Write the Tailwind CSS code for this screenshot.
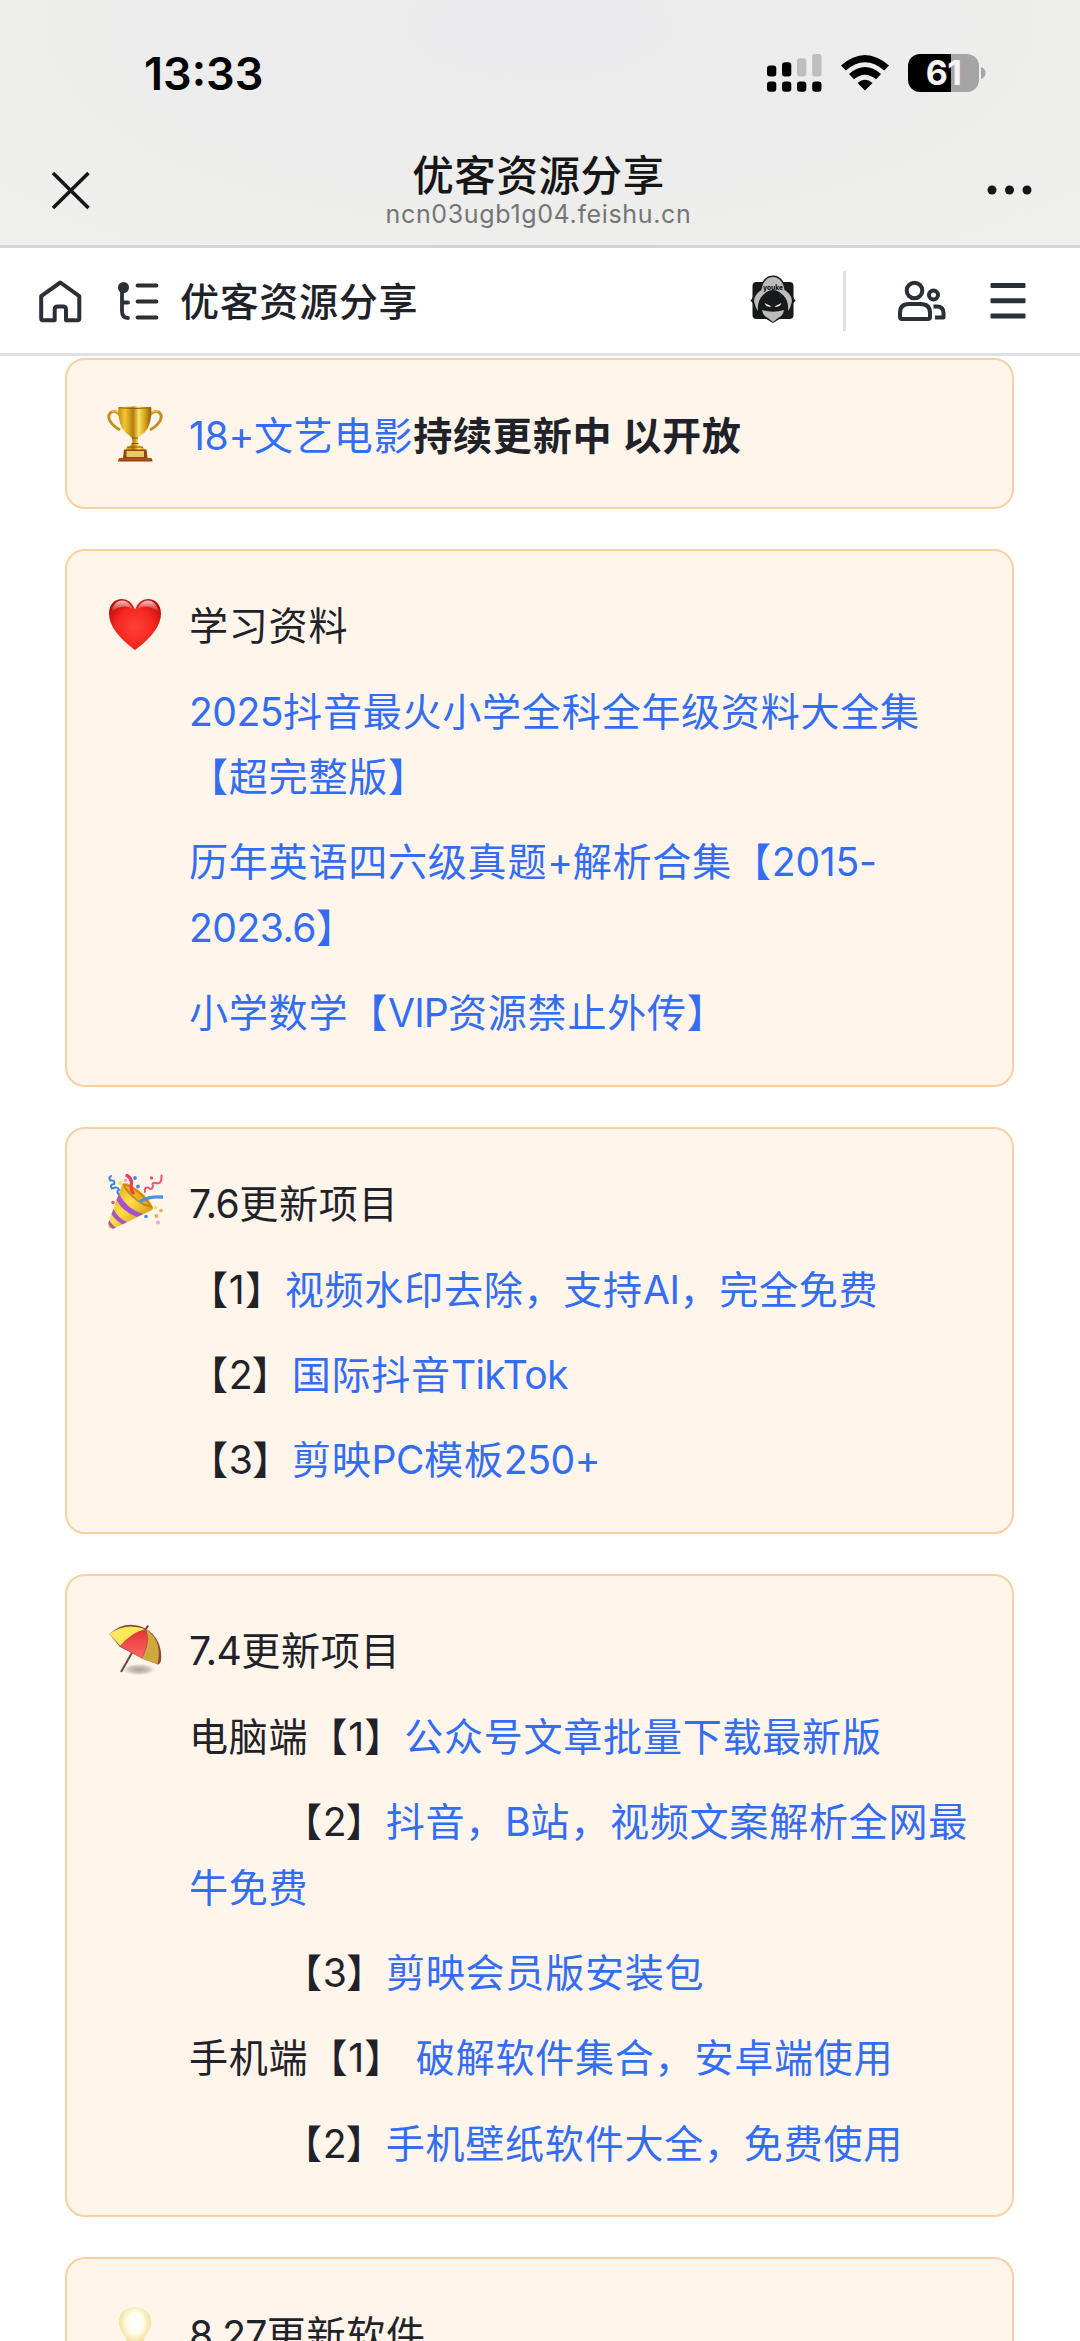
<!DOCTYPE html>
<html lang="zh-CN">
<head>
<meta charset="utf-8">
<title>优客资源分享</title>
<script src="https://cdn.jsdelivr.net/npm/@tailwindcss/browser@4"></script>
</head>
<body class="w-[1080px] h-[2341px] overflow-hidden bg-white text-[#1f2329] font-['Inter','Noto_Sans_CJK_SC',sans-serif] whitespace-nowrap flex flex-col">

<!-- Status bar and browser title -->
<header class="h-[248px] shrink-0 border-b-3 border-[#d3d6d8] bg-[radial-gradient(ellipse_at_50%_10%,#ebebed_0%,#ececed_35%,#eeeeec_75%,#efefee_100%)] text-black">
  <div class="h-[98px] pt-[50px] pl-[144px] pr-[94px] flex items-center justify-between">
    <div class="text-[45px] font-semibold leading-[48px]">13:33</div>
    <div class="flex items-center gap-[19px] mt-[-3px]">
      <svg class="w-[55px] h-[38px]" viewBox="0 0 55 38">
        <rect x="0" y="11.5" width="9.3" height="11" rx="3"/><rect x="15" y="8.2" width="9.3" height="14.3" rx="3"/>
        <rect x="30" y="4.2" width="9.3" height="18.3" rx="3" fill="#bdbdbe"/><rect x="45.2" y="0" width="9.3" height="22.5" rx="3" fill="#bdbdbe"/>
        <rect x="0" y="27.5" width="9.3" height="10.3" rx="3"/><rect x="15" y="27.5" width="9.3" height="10.3" rx="3"/><rect x="30" y="27.5" width="9.3" height="10.3" rx="3"/><rect x="45.2" y="27.5" width="9.3" height="10.3" rx="3"/>
      </svg>
      <svg class="w-[48px] h-[36px]" viewBox="0 0 48 36">
        <path d="M0 10.5Q24 -10.5 48 10.5L43.2 15.6Q24 -1 4.8 15.6Z"/>
        <path d="M8 19Q24 5 40 19L35 24.3Q24 15.3 13 24.3Z"/>
        <path d="M16.5 28Q24 21.5 31.5 28L24 35.5Z"/>
      </svg>
      <div class="flex items-center gap-[2px]">
        <div class="w-[71px] h-[38px] rounded-[12px] bg-[linear-gradient(90deg,#000_61%,#a4a4a5_61%)] flex items-center justify-center text-[#f4f4f4] text-[34px] font-bold leading-[38px] tracking-[-0.5px]">61</div>
        <svg class="w-[5px] h-[12px]" viewBox="0 0 5 12"><path d="M0 0Q4.500 1.500 4.500 6T0 12Z" fill="#a6a6a7"/></svg>
      </div>
    </div>
  </div>
  <div class="h-[147px] pl-[51px] pr-[48px] flex justify-between">
    <svg class="mt-[73px] w-[39px] h-[39px]" viewBox="0 0 39 39" fill="none" stroke="#161616" stroke-width="3.6"><path d="M2 2L37.500 37M37.500 2L2 37"/></svg>
    <div class="flex flex-col items-center">
      <div class="mt-[50px] h-[56px] leading-[56px] text-[41.5px] tracking-[0.6px] font-medium text-[#161616]">优客资源分享</div>
      <div class="mt-[-6px] leading-[32px] text-[25px] tracking-[0.65px] text-[#757575]">ncn03ugb1g04.feishu.cn</div>
    </div>
    <svg class="mt-[87px] w-[45px] h-[10px]" viewBox="0 0 45 10" fill="#161616"><circle cx="5" cy="5" r="4.500"/><circle cx="22.500" cy="5" r="4.500"/><circle cx="40" cy="5" r="4.500"/></svg>
  </div>
</header>

<!-- Document toolbar -->
<nav class="h-[108px] shrink-0 border-b-3 border-[#dee0e3] flex items-center">
  <svg class="ml-[38px] w-[44px] h-[44px]" viewBox="0 0 44 44" fill="none" stroke="#2b2f36" stroke-width="4" stroke-linejoin="round"><path d="M3.200 17.200L22.300 3.500L41.300 17.200V39.500Q41.300 41.300 39.500 41.300H28V30.500Q28 27.500 25 27.500H19.700Q16.700 27.500 16.700 30.500V41.300H5Q3.200 41.300 3.200 39.500Z"/></svg>
  <svg class="ml-[35px] w-[43px] h-[40px]" viewBox="0 0 43 40" fill="none" stroke="#2b2f36" stroke-width="3.800" stroke-linecap="round"><circle cx="6.500" cy="6.500" r="5.500" fill="#2b2f36" stroke="none"/><path d="M5 8V30Q5 37 11 37M5 21.500H11M20.500 4.500H39.500M20.500 20.500H39.500M20.500 36.500H39.500"/></svg>
  <div class="ml-[20px] w-[238px] mt-[2px] text-[39.1px] tracking-[0.6px] leading-[56px] font-medium">优客资源分享</div>
  <svg class="ml-[332px] w-[46px] h-[48px] mt-[-3px]" viewBox="0 0 46 48">
    <rect x="2.500" y="7" width="41" height="37" rx="4" fill="#171a1a"/>
    <path d="M23 .5C31 .5 35 8 36 14C40 17 43 21 44 24Q47 25.500 44 27L38 39L23 48L8 39L2 27Q-1 25.500 2 24C3 21 6 17 10 14C11 8 15 .5 23 .5Z" fill="#171a1a"/>
    <path d="M23 2C30 2 34 9 34.500 15C40 18 43 24 41.500 28Q40 34 38 36Q39 26 33 20Q28 15 23 15T13 20Q7 26 8 36Q6 34 4.500 28C3 24 6 18 11.500 15C12 9 16 2 23 2Z" fill="#bcbcbc"/>
    <path d="M12 35Q23 38.500 34 35Q33 41 28 43L23 47L18 43Q13 41 12 35Z" fill="#bcbcbc"/>
    <path d="M14.500 28L21.500 31.500Q17 33 14.500 28ZM31.500 28L24.500 31.500Q29 33 31.500 28Z" fill="#fff"/>
    <text x="23" y="15" font-size="7" font-weight="800" text-anchor="middle" fill="#171a1a" textLength="20" lengthAdjust="spacingAndGlyphs">youke</text>
  </svg>
  <div class="ml-[47px] w-[3px] h-[60px] bg-[#dee0e3]"></div>
  <svg class="ml-[51px] w-[50px] h-[42px]" viewBox="0 0 50 42" fill="none" stroke="#2b2f36" stroke-width="4" stroke-linejoin="round"><circle cx="17.500" cy="10.500" r="7.800"/><path d="M3 37V33Q3 24 12 24H23.500Q33 24 33 33V37Q33 39 31 39H5Q3 39 3 37Z"/><circle cx="36.500" cy="15" r="4.500"/><path d="M36.500 26.500H40Q46.500 26.500 46.500 33V37.500H38"/></svg>
  <svg class="ml-[43px] w-[36px] h-[36px]" viewBox="0 0 36 36" fill="#2b2f36"><rect x=".5" y="0" width="35" height="5" rx="1"/><rect x=".5" y="15.300" width="35" height="5" rx="1"/><rect x=".5" y="30.500" width="35" height="5" rx="1"/></svg>
</nav>

<!-- Callout blocks -->
<main class="pt-[2px] pl-[65px] grow min-h-0 overflow-hidden flex flex-col gap-[40.2px] text-[39.1px] tracking-[0.72px] leading-[65.3px]">

  <section class="w-[949px] h-[150.7px] shrink-0 rounded-[20px] border-2 border-[#fbd0a0] bg-[#fff5eb] pt-[42.5px] pl-[40px] flex items-start gap-[26px]">
    <svg class="mt-[3px] w-[56px] h-[56px] shrink-0" viewBox="0 0 56 56">
      <defs>
        <linearGradient id="gold"><stop offset="0" stop-color="#c98a10"/><stop offset=".2" stop-color="#f3c633"/><stop offset=".45" stop-color="#b57c08"/><stop offset=".62" stop-color="#fde36a"/><stop offset=".8" stop-color="#dba51c"/><stop offset="1" stop-color="#8f5a05"/></linearGradient>
      </defs>
      <path d="M13 9Q9 4 4.500 6Q0 9 3 15Q6 20 13 24M43 9Q47 4 51.500 6Q56 9 53 15Q50 20 43 24" fill="none" stroke="#c58f1d" stroke-width="2.800"/>
      <path d="M13 8Q9 3.500 5 5.500M43 8Q47 3.500 51 5.500" fill="none" stroke="#efc645" stroke-width="1.200"/>
      <path d="M11.300 1.500Q28 -.5 44.300 1.500Q45 19 38 26Q33 30 31 32L30.500 37Q32 40 36 41L38 44H18L20 41Q24 40 25.500 37L25 32Q23 30 18 26Q11 19 11.300 1.500Z" fill="url(#gold)"/>
      <path d="M11.500 1.700Q28 3.500 44 1.700" stroke="#8d6309" fill="none"/>
      <path d="M25 32H31M24.500 37.500H31.500M20 41H36" stroke="#8a5905" stroke-width="1"/>
      <path d="M17 43.500H39.500L40.500 52H44Q45.700 52.500 45.500 55.500H11Q11 52.500 12.500 52H16Z" fill="#96430f"/>
      <rect x="19.500" y="45" width="17.500" height="6" fill="#ecc76c"/>
      <path d="M12 53H45" stroke="#c26a2a" stroke-width=".8"/>
    </svg>
    <p><span class="text-[#336df4]"><span class="tracking-[-0.3px]">18+</span>文艺电影</span><b class="font-bold">持续更新中 以开放</b></p>
  </section>

  <section class="w-[949px] h-[537.7px] shrink-0 rounded-[20px] border-2 border-[#fbd0a0] bg-[#fff5eb] pt-[42.5px] pl-[40px] flex items-start gap-[26px]">
    <svg class="mt-[3px] w-[56px] h-[56px] shrink-0" viewBox="0 0 56 56">
      <defs>
        <radialGradient id="heart" cx=".5" cy=".55" r=".6"><stop offset="0" stop-color="#ff4136"/><stop offset=".6" stop-color="#f5281f"/><stop offset="1" stop-color="#bd0d0d"/></radialGradient>
        <linearGradient id="shine" x2="0" y2="1"><stop offset="0" stop-color="#fff" stop-opacity=".75"/><stop offset="1" stop-color="#fff" stop-opacity="0"/></linearGradient>
      </defs>
      <path d="M28 54Q2 35 2 17.500C2 8 8 3 15 3Q24 3 28 13.500Q32 3 41 3C48 3 54 8 54 17.500Q54 35 28 54Z" fill="url(#heart)"/>
      <path d="M5 13Q8 4.500 15 4.500T25.500 13Q16 7 5 16ZM51 13Q48 4.500 41 4.500T30.500 13Q40 7 51 16Z" fill="url(#shine)"/>
    </svg>
    <div class="flex flex-col gap-[20.1px] text-[#336df4]">
      <p class="text-[#1f2329]">学习资料</p>
      <p><span class="tracking-[-0.5px]">2025</span>抖音最火小学全科全年级资料大全集<br>【超完整版】</p>
      <p>历年英语四六级真题<span class="tracking-[-0.3px]">+</span>解析合集【<span class="tracking-[-0.2px]">2015-</span><br><span class="tracking-[-0.5px]">2023.6</span>】</p>
      <p>小学数学【<span class="tracking-[-0.8px]">VIP</span>资源禁止外传】</p>
    </div>
  </section>

  <section class="w-[949px] h-[407px] shrink-0 rounded-[20px] border-2 border-[#fbd0a0] bg-[#fff5eb] pt-[42.5px] pl-[40px] flex items-start gap-[26px]">
    <svg class="mt-[3px] w-[56px] h-[56px] shrink-0" viewBox="0 0 56 56">
      <defs>
        <linearGradient id="cone" x1="0" y1=".2" x2=".8" y2="1"><stop offset="0" stop-color="#e2a414"/><stop offset=".45" stop-color="#ffe04a"/><stop offset="1" stop-color="#c68a10"/></linearGradient>
      </defs>
      <path d="M15.500 9.500Q17 7.500 24 11Q38 18 45.500 32Q47 35 44 36.500L7 54.500Q0 56 1 50Z" fill="url(#cone)"/>
      <path d="M16 10Q22 9 32 17T45.500 34Q36 33 26 24T16 10Z" fill="#c98411"/>
      <path d="M18 12Q22 11 30 18T42 31Q34 30 26 22Z" fill="#e9ae25"/>
      <path d="M12 20Q20 35 36 40L30 43Q16 38 9.500 26ZM6.500 35Q11 44 20 48L15.500 50.500Q8 46 4.500 40ZM2.500 46Q4.500 51 9 53.500L6 54.800Q2 53 1.300 49Z" fill="#a653cf"/>
      <g fill="none" stroke-linecap="round" stroke-width="2.600">
        <path d="M4 2Q1 4 3.500 6.500Q9 6 7 10Q2 11 5 14.500Q11 12 12 16Q9 17 11.500 20" stroke="#3c7fdc" stroke-width="2"/>
        <path d="M20 1.500Q26 5 24 12Q24 16 26 19" stroke="#ea3c5b" stroke-width="3.200"/>
        <path d="M34 27Q43 22 55 23" stroke="#4b91e8" stroke-width="3.400"/>
        <path d="M38 18Q37 13 41 13.500Q45 17 46 12Q44 8 49 9Q55 11 54.500 1.500" stroke="#ee5679" stroke-width="2"/>
      </g>
      <g fill="#ec5062"><circle cx="44.500" cy="4" r="1.700"/><circle cx="6" cy="28.500" r="1.700"/></g>
      <g fill="#4a86df"><circle cx="28" cy="4" r="1.900"/><circle cx="31" cy="12.500" r="1.900"/><circle cx="39" cy="42.500" r="1.800"/></g>
      <g fill="#f6a45d"><circle cx="54" cy="36.500" r="1.800"/><circle cx="49.500" cy="42" r="1.900"/></g>
      <g fill="#f6a3b7"><circle cx="51" cy="48.500" r="2"/><circle cx="18.500" cy="6.500" r="1.700"/></g>
      <g fill="#fbe05a"><circle cx="13" cy="9" r="1.900"/><circle cx="48.500" cy="33.500" r="1.900"/></g>
    </svg>
    <div class="flex flex-col gap-[20.1px]">
      <p><span class="tracking-[-0.5px]">7.6</span>更新项目</p>
      <p>【<span class="tracking-[0.2px]">1</span>】<span class="text-[#336df4]">视频水印去除，支持<span class="tracking-[-0.5px]">AI</span>，完全免费</span></p>
      <p>【<span class="tracking-[-0.8px]">2</span>】<span class="text-[#336df4]">国际抖音<span class="tracking-[-0.7px]">TikTok</span></span></p>
      <p>【<span class="tracking-[-0.8px]">3</span>】<span class="text-[#336df4]">剪映<span class="tracking-[-0.5px]">PC</span>模板<span class="tracking-[-0.4px]">250+</span></span></p>
    </div>
  </section>

  <section class="w-[949px] h-[643px] shrink-0 rounded-[20px] border-2 border-[#fbd0a0] bg-[#fff5eb] pt-[42.5px] pl-[40px] flex items-start gap-[26px]">
    <svg class="mt-[3px] w-[56px] h-[56px] shrink-0" viewBox="0 0 56 56">
      <defs>
        <radialGradient id="shade"><stop offset="0" stop-color="#8f8882" stop-opacity=".8"/><stop offset=".6" stop-color="#a9a19a" stop-opacity=".55"/><stop offset="1" stop-color="#c9c0b8" stop-opacity="0"/></radialGradient>
        <linearGradient id="red" x2="0" y2="1"><stop offset="0" stop-color="#e23434"/><stop offset="1" stop-color="#ff6464"/></linearGradient>
      </defs>
      <ellipse cx="32" cy="48.500" rx="17" ry="6" fill="url(#shade)"/>
      <path d="M26 30L14 51" stroke="#70453a" stroke-width="2"/>
      <path d="M2.500 13Q18 -2 38 7Q56 18 54 40Q52 45 50 43L36 38L13 26Z" fill="#8c4a36"/>
      <path d="M2.500 13Q18 1 38 8Q24 13 14 25.500Z" fill="#fbe95c"/>
      <path d="M39 8Q23 12 13 25L35 37.500Q43 20 39 8Z" fill="url(#red)"/>
      <path d="M39 8Q44 21 35 37.500L50.500 43Q56 20 39 8Z" fill="#cfa940"/>
      <path d="M39 8L41 4.500" stroke="#5c4a42" stroke-width="2"/>
    </svg>
    <div class="flex flex-col gap-[20.1px]">
      <p><span class="tracking-[-0.5px]">7.4</span>更新项目</p>
      <p>电脑端【<span class="tracking-[0.2px]">1</span>】<span class="text-[#336df4]">公众号文章批量下载最新版</span></p>
      <p class="indent-[94px]">【<span class="tracking-[-0.8px]">2</span>】<span class="text-[#336df4]">抖音，<span class="tracking-[-0.3px]">B</span>站，视频文案解析全网最<br>牛免费</span></p>
      <p class="indent-[94px]">【<span class="tracking-[-0.8px]">3</span>】<span class="text-[#336df4]">剪映会员版安装包</span></p>
      <p>手机端【<span class="tracking-[0.2px]">1</span>】 <span class="text-[#336df4]">破解软件集合，安卓端使用</span></p>
      <p class="indent-[94px]">【<span class="tracking-[-0.8px]">2</span>】<span class="text-[#336df4]">手机壁纸软件大全，免费使用</span></p>
    </div>
  </section>

  <section class="w-[949px] h-[160px] shrink-0 rounded-t-[20px] border-2 border-b-0 border-[#fbd0a0] bg-[#fff5eb] pt-[42.5px] pl-[40px] flex items-start gap-[26px]">
    <svg class="mt-[3px] w-[56px] h-[56px] shrink-0" viewBox="0 0 56 56">
      <defs><radialGradient id="bulb" cx=".5" cy=".4" r=".6"><stop offset="0" stop-color="#fff"/><stop offset=".45" stop-color="#fffbe8"/><stop offset="1" stop-color="#ecd577"/></radialGradient></defs>
      <path d="M28 2Q44 3 44 18Q44 24 39 30Q36 34 35.500 42H20.500Q20 34 17 30Q12 24 12 18Q12 3 28 2Z" fill="url(#bulb)"/>
      <path d="M21 42H35V51Q28 58 21 51Z" fill="#a5a5a5"/>
    </svg>
    <p><span class="tracking-[-0.7px]">8.27</span>更新软件</p>
  </section>
</main>
</body>
</html>
